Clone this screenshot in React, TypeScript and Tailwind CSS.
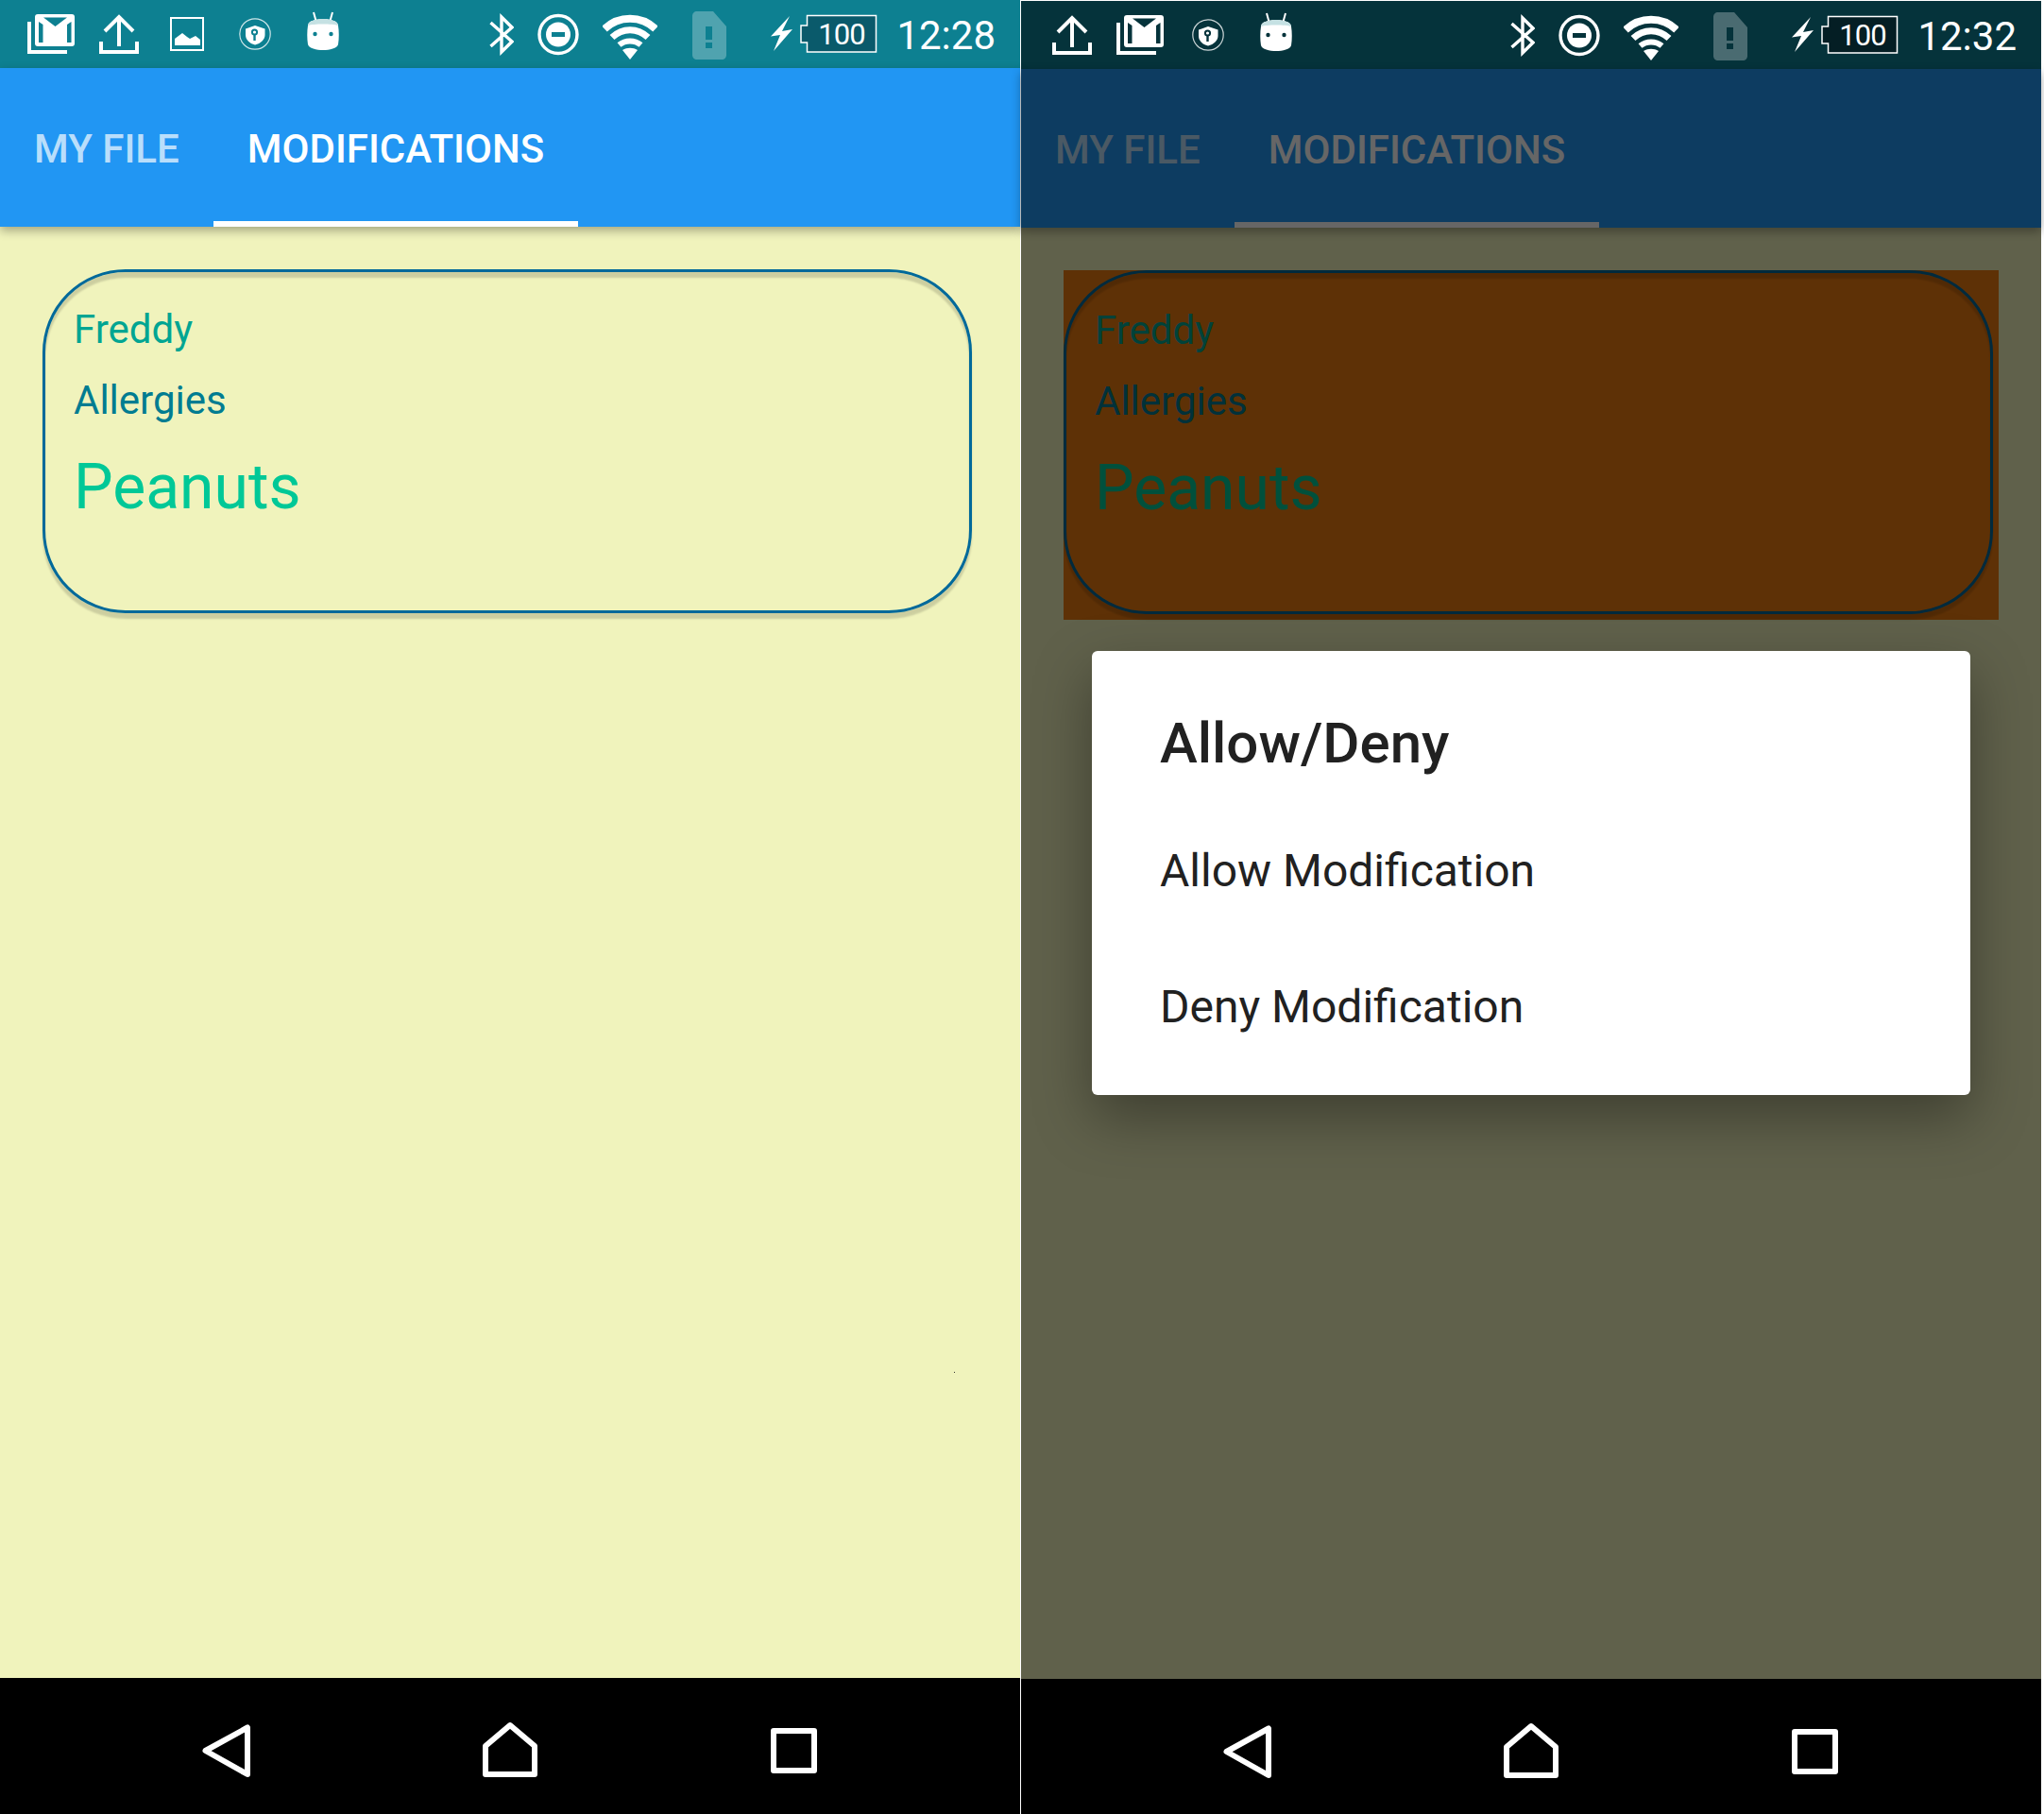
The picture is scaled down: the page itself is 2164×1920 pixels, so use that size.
import React from 'react';

type IconProps = { bg: string };

const GmailIcon: React.FC<IconProps> = ({ bg }) => (
  <svg width={50} height={72} viewBox="29 0 50 72" className="shrink-0">
    <path d="M31 23V55H71" fill="none" stroke="#fff" strokeWidth={4} />
    <rect x={37} y={15} width={42} height={34} rx={3} fill="#fff" />
    <path d="M41 23L45.500 26V45H41Z M71 26L75.500 23V45H71Z M46 18.500H71L58.500 28Z" fill={bg} />
  </svg>
);

const UploadIcon: React.FC = () => (
  <svg width={42} height={72} viewBox="105 0 42 72" className="shrink-0">
    <path d="M126 17V49 M111 33L126 18L141 33 M107 44V55H145V44" fill="none" stroke="#fff" strokeWidth={4} />
  </svg>
);

const ImageIcon: React.FC = () => (
  <svg width={36} height={72} viewBox="180 0 36 72" className="shrink-0">
    <rect x={181} y={19} width={34} height={34} fill="none" stroke="#fff" strokeWidth={2} />
    <path d="M185 48V41L193 35L198 39L201 41L207 38L212 42V48Z" fill="#fff" />
  </svg>
);

const ShieldIcon: React.FC<IconProps> = ({ bg }) => (
  <svg width={34} height={72} viewBox="253 0 34 72" className="shrink-0">
    <circle cx={270} cy={36} r={16.2} fill="none" stroke="#fff" strokeOpacity={0.8} strokeWidth={1.2} />
    <path d="M270 27L280.500 30.500V37C280.500 42 276 46 270 47.500C264 46 260 42 260 37V30.500Z" fill="#fff" />
    <circle cx={269.500} cy={34} r={2.600} fill="none" stroke={bg} strokeWidth={2} />
    <path d="M269.500 36V43" stroke={bg} strokeWidth={2.400} />
  </svg>
);

const AndroidIcon: React.FC<IconProps> = ({ bg }) => (
  <svg width={34} height={72} viewBox="325 0 34 72" className="shrink-0">
    <path d="M332 13L334.500 22 M352 13L349.500 22" stroke="#fff" strokeWidth={2} />
    <path d="M326 27C326 22 335 20 342 20C349 20 358 22 358 27C359 33 359 41 358 47C357 51 349 53 342 53C335 53 327 51 326 47C325 41 325 33 326 27Z" fill="#fff" />
    <path d="M326 27C326 22 335 20 342 20C349 20 358 22 358 27C352 25 332 25 326 27Z" fill="#c5e1e3" />
    <circle cx={333.500} cy={36} r={2.200} fill={bg} />
    <circle cx={350.500} cy={36} r={2.200} fill={bg} />
  </svg>
);

const SystemIcons: React.FC<IconProps & { batteryFill: string; time: string }> = ({ bg, batteryFill, time }) => (
  <div className="flex items-center">
    <svg width={26} height={72} viewBox="518 0 26 72" className="shrink-0">
      <path d="M519.500 24L542 44L531 55V18L542 29L519.500 49" fill="none" stroke="#fff" strokeWidth={3.400} />
    </svg>
    <svg width={44} height={72} viewBox="569 0 44 72" className="ml-[25px] shrink-0">
      <circle cx={591} cy={36.500} r={20} fill="none" stroke="#fff" strokeWidth={3.400} />
      <circle cx={591} cy={36.500} r={13} fill="#fff" />
      <rect x={584} y={34} width={14} height={5} fill={bg} />
    </svg>
    <svg width={58} height={72} viewBox="638 0 58 72" className="ml-[25px] shrink-0">
      <path d="M640 30.500C655 16 679 16 694 30.500" fill="none" stroke="#fff" strokeWidth={8} />
      <path d="M648 39.500C659 29 675 29 686 39.500" fill="none" stroke="#fff" strokeWidth={7} />
      <path d="M655.500 47.500C662 42 672 42 678.500 47.500" fill="none" stroke="#fff" strokeWidth={6} />
      <path d="M659 53C664 50 670 50 675 53L667 63Z" fill="#fff" />
    </svg>
    <svg width={36} height={72} viewBox="733 0 36 72" className="ml-[37px] shrink-0">
      <path d="M738 12H755L769 28V58C769 61 767 63 764 63H738C735 63 733 61 733 58V17C733 14 735 12 738 12Z" fill="#fff" fillOpacity={0.28} />
      <path d="M747 28H754V42H747Z M747 45H754V51H747Z" fill={bg} />
    </svg>
    <svg width={23} height={72} viewBox="816 0 23 72" className="ml-[47px] shrink-0">
      <path d="M836 17L816 38.500L826 37L819 54L839 31L828 33Z" fill="#fff" />
    </svg>
    <svg width={82} height={72} viewBox="847 0 82 72" className="ml-[8px] shrink-0">
      <path d="M854.500 16.500H927.500V55H854.500V45H848V27H854.500Z" fill={batteryFill} stroke="#fff" strokeWidth={1.500} />
      <text x={891} y={47} textAnchor="middle" fill="#fff" fontSize={31} letterSpacing={-1}>100</text>
    </svg>
    <div className="ml-[20px] translate-y-[2px] text-[42px] leading-[72px] text-white">{time}</div>
  </div>
);

const NavBar: React.FC = () => (
  <div className="flex h-[144px] shrink-0 items-start bg-black pl-[214px]">
    <svg width={51} height={144} viewBox="214 0 51 144" className="shrink-0">
      <path d="M262 52.500V102L217.500 77Z" fill="none" stroke="#fff" strokeWidth={6} strokeLinejoin="round" />
    </svg>
    <svg width={58} height={144} viewBox="511 0 58 144" className="ml-[246px] shrink-0">
      <path d="M514 102V72L540 50L566 72V102Z" fill="none" stroke="#fff" strokeWidth={6} strokeLinejoin="round" />
    </svg>
    <svg width={49} height={144} viewBox="816 0 49 144" className="ml-[247px] shrink-0">
      <rect x={819} y={56} width={43} height={42} fill="none" stroke="#fff" strokeWidth={6} strokeLinejoin="round" />
    </svg>
  </div>
);

const Tabs: React.FC = () => (
  <div className="relative z-10 flex h-[168px] shrink-0 bg-[#2196f3] text-[42px] font-medium leading-[56px] shadow-[0_4px_10px_rgba(0,0,0,0.32)]">
    <div className="flex w-[226px] items-center border-b-[6px] border-transparent pl-[36px] pt-[9px] text-white/70">MY FILE</div>
    <div className="flex w-[386px] items-center justify-center border-b-[6px] border-white pt-[9px] text-white">MODIFICATIONS</div>
  </div>
);

const Card: React.FC = () => (
  <div className="h-[364px] w-[984px] rounded-[88px] border-[3px] border-[#00699a] pl-[30px] pt-[33px] shadow-[0_6px_2px_rgba(0,0,0,0.15),inset_0_6px_2px_rgba(0,0,0,0.15)]">
    <div className="text-[42px] leading-[56px] text-[#00a592]">Freddy</div>
    <div className="mt-[19px] text-[42px] leading-[56px] text-[#007c91]">Allergies</div>
    <div className="mt-[24px] text-[66px] leading-[80px] text-[#00c897]">Peanuts</div>
  </div>
);

const Phone: React.FC<{ bg: string; children: React.ReactNode; status: React.ReactNode }> = ({ bg, children, status }) => (
  <div className="flex h-[1920px] w-[1080px] shrink-0 flex-col">
    <div className="flex h-[72px] shrink-0 items-center justify-between pr-[26px]" style={{ backgroundColor: bg }}>
      {status}
    </div>
    <div className="relative flex h-[1704px] shrink-0 flex-col bg-[#f0f3bc]">{children}</div>
    <NavBar />
  </div>
);

export default function App() {
  const teal = '#0d8091';
  const dark = '#05333b';

  return (
    <div className="flex h-[1920px] w-[2164px] items-start gap-px overflow-hidden bg-white font-[Roboto,sans-serif]">
      <Phone
        bg={teal}
        status={
          <>
            <div className="flex items-center pl-[29px]">
              <GmailIcon bg={teal} />
              <div className="ml-[26px]"><UploadIcon /></div>
              <div className="ml-[33px]"><ImageIcon /></div>
              <div className="ml-[37px]"><ShieldIcon bg={teal} /></div>
              <div className="ml-[38px]"><AndroidIcon bg={teal} /></div>
            </div>
            <SystemIcons bg={teal} batteryFill="#0a5a6b" time="12:28" />
          </>
        }
      >
        <Tabs />
        <div className="flex-1 pl-[45px] pt-[45px]">
          <Card />
        </div>
        <div className="absolute left-[1010px] top-[1380px] size-px bg-[#333]" />
      </Phone>

      <div className="mt-px">
        <Phone
          bg={dark}
          status={
            <>
              <div className="flex items-center pl-[33px]">
                <UploadIcon />
                <div className="ml-[26px]"><GmailIcon bg={dark} /></div>
                <div className="ml-[30px]"><ShieldIcon bg={dark} /></div>
                <div className="ml-[38px]"><AndroidIcon bg={dark} /></div>
              </div>
              <SystemIcons bg={dark} batteryFill="#041e24" time="12:32" />
            </>
          }
        >
          <Tabs />
          <div className="flex-1 pl-[45px] pt-[45px]">
            <div className="h-[370px] w-[990px] bg-[#ec7b10]">
              <Card />
            </div>
          </div>

          {/* dim layer + dialog */}
          <div className="absolute inset-0 z-20 bg-black/60" />
          <div className="absolute left-[75px] top-[616px] z-30 w-[930px] rounded-[6px] bg-white pb-[21px] pl-[72px] pt-[58px] text-[#212121] shadow-[0_24px_60px_rgba(0,0,0,0.35)]">
            <div className="text-[60px] font-medium leading-[80px]">Allow/Deny</div>
            <div className="mt-[23px] text-[48px] leading-[144px]">Allow Modification</div>
            <div className="text-[48px] leading-[144px]">Deny Modification</div>
          </div>
        </Phone>
      </div>
    </div>
  );
}
